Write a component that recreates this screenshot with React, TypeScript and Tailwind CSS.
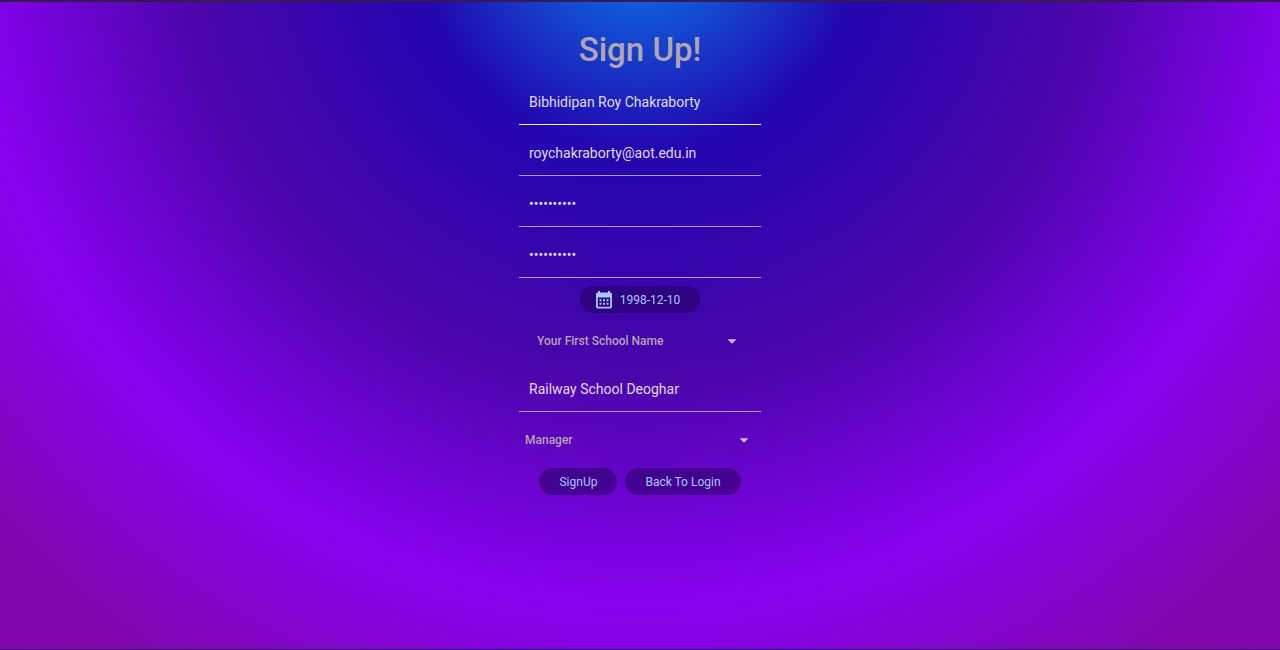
import { useState } from "react";
import type { InputHTMLAttributes, SelectHTMLAttributes } from "react";

type FieldProps = InputHTMLAttributes<HTMLInputElement> & {
  label: string;
  active?: boolean;
};

function Field({ label, active = false, ...rest }: FieldProps) {
  return (
    <input
      aria-label={label}
      className={
        "block h-[51px] w-full border-b bg-transparent px-2.5 pt-1.5 text-[14px] text-[#e0dcf8] outline-none " +
        (active ? "border-[#fbf3f4]" : "border-[#b59ae8]")
      }
      {...rest}
    />
  );
}

type DropdownProps = SelectHTMLAttributes<HTMLSelectElement> & {
  label: string;
  options: string[];
};

function Dropdown({ label, options, ...rest }: DropdownProps) {
  return (
    <div className="relative flex items-center">
      <select
        aria-label={label}
        className="h-10 w-full appearance-none bg-transparent text-[12px] font-medium text-[#b9a3b3] outline-none"
        {...rest}
      >
        {options.map((option) => (
          <option key={option}>{option}</option>
        ))}
      </select>
      <svg
        viewBox="0 0 10 5"
        className="pointer-events-none absolute right-0 h-[5px] w-[10px] fill-[#d3b8f4]"
        aria-hidden="true"
      >
        <path d="M0.5 0.3h9L5 4.800z" />
      </svg>
    </div>
  );
}

function CalendarIcon() {
  return (
    <svg viewBox="0 0 16 18" className="h-[18px] w-4 fill-[#a6c8ff]" aria-hidden="true">
      <path
        fillRule="evenodd"
        d="M2 0h2v1.500h8V0h2v1.500h.2A1.800 1.800 0 0 1 16 3.300v12.400a1.800 1.800 0 0 1-1.800 1.800H1.800A1.800 1.800 0 0 1 0 15.700V3.300a1.800 1.800 0 0 1 1.800-1.800H2zM1.800 6.500v9.200h12.400V6.500z"
      />
      <path d="M3.500 8.200h2v2h-2zm3.500 0h2v2H7zm3.500 0h2v2h-2zM3.500 11.800h2v2h-2zm3.500 0h2v2H7zm3.500 0h2v2h-2z" />
    </svg>
  );
}

const pill =
  "flex h-[27px] items-center rounded-full bg-[#200058]/50 text-[12px] text-[#a6c8ff]";

export default function App() {
  const [name, setName] = useState("Bibhidipan Roy Chakraborty");
  const [email, setEmail] = useState("roychakraborty@aot.edu.in");
  const [password, setPassword] = useState("1234567890");
  const [confirm, setConfirm] = useState("1234567890");
  const [answer, setAnswer] = useState("Railway School Deoghar");

  return (
    <main className="min-h-screen border-t-2 border-b border-t-[#221f33]/80 border-b-black/50 bg-[radial-gradient(circle_900px_at_50%_-75px,#0585ec_0%,#2206b0_25%,#4a06aa_50%,#8802f0_75%,#8008ac_98%)] font-['Roboto',sans-serif]">
      <form
        className="mx-auto flex w-[242px] flex-col items-center pt-6"
        onSubmit={(event) => event.preventDefault()}
      >
        <h1 className="h-12 text-[33px] leading-[48px] font-medium text-[#b3a5b0]">Sign Up!</h1>
        <Field label="Name" active value={name} onChange={(e) => setName(e.target.value)} />
        <Field label="Email" type="email" value={email} onChange={(e) => setEmail(e.target.value)} />
        <Field
          label="Password"
          type="password"
          value={password}
          onChange={(e) => setPassword(e.target.value)}
        />
        <Field
          label="Confirm password"
          type="password"
          value={confirm}
          onChange={(e) => setConfirm(e.target.value)}
        />
        <button type="button" className={pill + " mt-2 gap-2 pr-5 pl-4"}>
          <CalendarIcon />
          1998-12-10
        </button>
        <div className="mt-2 w-full pr-6 pl-[18px]">
          <Dropdown
            label="Security question"
            options={["Your First School Name", "Your First Pet Name"]}
          />
        </div>
        <Field label="Answer" value={answer} onChange={(e) => setAnswer(e.target.value)} />
        <div className="mt-2 w-full pr-3 pl-1.5">
          <Dropdown label="Role" options={["Manager", "Employee"]} />
        </div>
        <div className="mt-2 flex gap-2">
          <button type="submit" className={pill + " px-5"}>
            SignUp
          </button>
          <button type="button" className={pill + " px-5"}>
            Back To Login
          </button>
        </div>
      </form>
    </main>
  );
}
